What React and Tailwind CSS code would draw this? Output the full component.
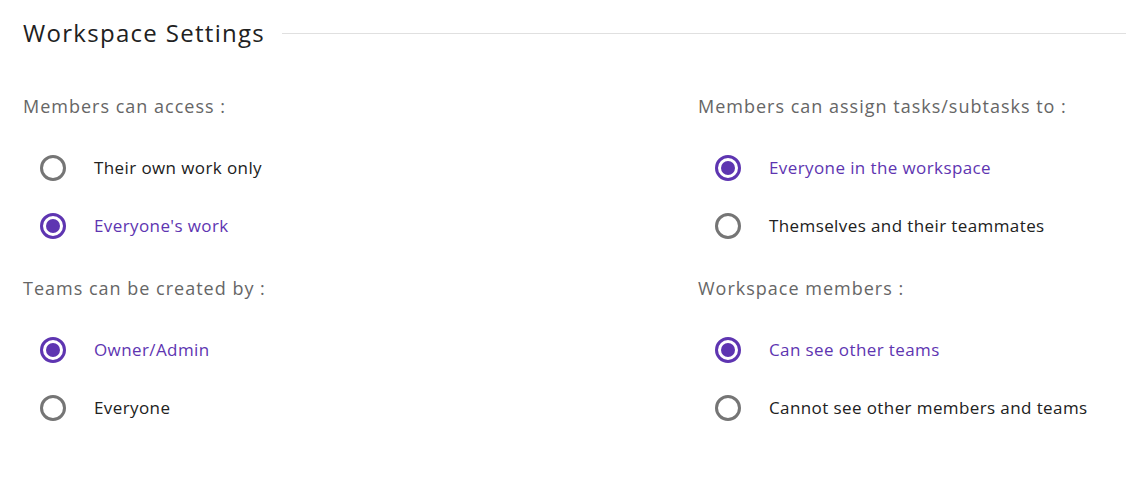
import React, { useState } from "react";

const Radio = ({ checked, label, onClick }) => (
  <button
    type="button"
    onClick={onClick}
    className="flex h-[58px] items-center pl-[17px] text-left"
  >
    <span
      className={
        checked
          ? "flex h-[26px] w-[26px] items-center justify-center rounded-full border-[3px] border-[#5e35b1]"
          : "flex h-[26px] w-[26px] items-center justify-center rounded-full border-[3px] border-[#757575]"
      }
    >
      {checked && <span className="h-[14px] w-[14px] rounded-full bg-[#5e35b1]" />}
    </span>
    <span
      className={
        checked
          ? "ml-[28px] text-[17px] tracking-[0.4px] text-[#5e35b1]"
          : "ml-[28px] text-[17px] tracking-[0.4px] text-[#212121]"
      }
    >
      {label}
    </span>
  </button>
);

const Group = ({ title, options, initial }) => {
  const [value, setValue] = useState(initial);
  return (
    <div>
      <div className="h-[66px] text-[18px] leading-[66px] tracking-[1px] text-[#666666]">
        {title}
      </div>
      <div className="flex flex-col">
        {options.map((o, i) => (
          <Radio key={o} label={o} checked={value === i} onClick={() => setValue(i)} />
        ))}
      </div>
    </div>
  );
};

export default function App() {
  return (
    <div className="h-[496px] w-[1126px] bg-white font-['Open_Sans',sans-serif]">
      <div className="flex items-center pl-[23px] pt-[17px]">
        <h1 className="text-[24px] leading-[32px] tracking-[1.3px] text-[#212121]">
          Workspace Settings
        </h1>
        <div className="ml-[17px] h-px flex-1 bg-[#e0e0e0]" />
      </div>
      <div className="mt-[24px] grid grid-cols-[675px_1fr] pl-[23px]">
        <div className="flex flex-col">
          <Group
            title="Members can access :"
            options={["Their own work only", "Everyone's work"]}
            initial={1}
          />
          <Group
            title="Teams can be created by :"
            options={["Owner/Admin", "Everyone"]}
            initial={0}
          />
        </div>
        <div className="flex flex-col">
          <Group
            title="Members can assign tasks/subtasks to :"
            options={["Everyone in the workspace", "Themselves and their teammates"]}
            initial={0}
          />
          <Group
            title="Workspace members :"
            options={["Can see other teams", "Cannot see other members and teams"]}
            initial={0}
          />
        </div>
      </div>
    </div>
  );
}
